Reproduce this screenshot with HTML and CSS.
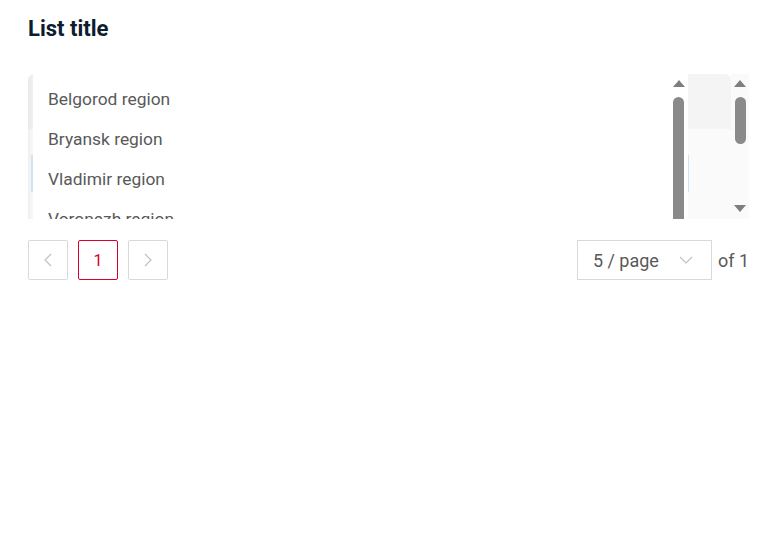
FILE: index.html
```html
<!DOCTYPE html>
<html>
<head>
<meta charset="utf-8">
<link rel="stylesheet" href="styles.css">
</head>
<body>
<div class="page">
  <h1 class="title">List title</h1>
  <div class="outer">
    <div class="outer-body">
      <div class="band-top"></div>
      <div class="band-bottom"><span class="sel-mark left"></span><span class="sel-mark right"></span></div>
      <div class="inner">
        <ul class="items">
          <li>Belgorod region</li>
          <li>Bryansk region</li>
          <li>Vladimir region</li>
          <li>Voronezh region</li>
        </ul>
        <div class="sbar inner-bar">
          <span class="arrow up"></span>
          <span class="thumb long"></span>
        </div>
      </div>
    </div>
    <div class="sbar outer-bar">
      <span class="arrow up"></span>
      <span class="thumb short"></span>
      <span class="spacer"></span>
      <span class="arrow down"></span>
    </div>
  </div>
  <div class="pager">
    <div class="pages">
      <button class="pbtn nav"><svg width="16" height="16" viewBox="0 0 16 16"><path d="M11 2 L5 8 L11 14" fill="none" stroke="#bdbdbd" stroke-width="1.1"/></svg></button>
      <button class="pbtn active">1</button>
      <button class="pbtn nav"><svg width="16" height="16" viewBox="0 0 16 16"><path d="M5 2 L11 8 L5 14" fill="none" stroke="#bdbdbd" stroke-width="1.1"/></svg></button>
    </div>
    <div class="size">
      <div class="select"><span>5 / page</span><svg width="14" height="10" viewBox="0 0 14 10"><path d="M1 2 L7 8 L13 2" fill="none" stroke="#bfbfbf" stroke-width="1.1"/></svg></div>
      <span class="of">of 1</span>
    </div>
  </div>
</div>
</body>
</html>
```
FILE: styles.css
```css
* { box-sizing: border-box; }
html, body { margin: 0; padding: 0; background: #fff; }
body { font-family: Roboto, "Noto Sans", sans-serif; }
.page { padding: 14px 34px 0 28px; width: 783px; }
.title { margin: 0; font-size: 22px; line-height: 30px; font-weight: 700; color: #0e1c2f; }
.outer {
  margin-top: 30px;
  height: 145px;
  display: flex;
  overflow: hidden;
  border-top-left-radius: 6px;
}
.outer-body { position: relative; flex: 1; overflow: hidden; border-top-right-radius: 6px; }
.band-top { height: 55px; background: linear-gradient(90deg, #e9e9e9 0, #f2f2f2 6px, #f4f4f4 100%); }
.band-bottom { height: 90px; background: linear-gradient(90deg, #efefef 0, #fafafa 6px, #fafafa 100%); position: relative; }
.sel-mark { position: absolute; top: 26px; width: 2px; height: 37px; background: #cfe3f7; }
.sel-mark.left { left: 3px; }
.sel-mark.right { left: 659px; }
.inner {
  position: absolute; left: 5px; top: 0; bottom: 0; width: 655px;
  background: #fff; display: flex;
}
.items { list-style: none; margin: 0; padding: 5px 0 0 15px; flex: 1; }
.items li { height: 40px; line-height: 40px; font-size: 17.4px; color: #595959; }
.sbar { display: flex; flex-direction: column; align-items: center; width: 18px; padding-top: 6px; }
.inner-bar { background: #fff; margin-right: 1px; width: 17px; }
.outer-bar { background: #fafafa; width: 18px; }
.arrow { width: 0; height: 0; border-left: 6px solid transparent; border-right: 6px solid transparent; }
.arrow.up { border-bottom: 7px solid #7e7e7e; }
.arrow.down { border-top: 7px solid #7e7e7e; margin-bottom: 7px; }
.thumb { width: 11px; background: #8a8a8a; border-radius: 6px; margin-top: 10px; }
.thumb.long { flex: 1; border-bottom-left-radius: 0; border-bottom-right-radius: 0; }
.thumb.short { height: 47px; }
.spacer { flex: 1; }
.pager { margin-top: 21px; display: flex; justify-content: space-between; align-items: center; }
.pages { display: flex; gap: 10px; }
.pbtn {
  width: 40px; height: 40px; border: 1px solid #d9d9d9; border-radius: 2px; background: #fff;
  display: flex; align-items: center; justify-content: center; padding: 0;
  font-family: Roboto, sans-serif; font-size: 16px; color: #595959;
}
.pbtn.active { border-color: #d9002b; color: #d9002b; }
.size { display: flex; align-items: center; gap: 6px; }
.select {
  width: 135px; height: 40px; border: 1px solid #d9d9d9; display: flex; align-items: center;
  justify-content: space-between; padding: 0 18px 0 15px; font-size: 18px; color: #595959;
}
.of { font-size: 18px; color: #595959; }
```
